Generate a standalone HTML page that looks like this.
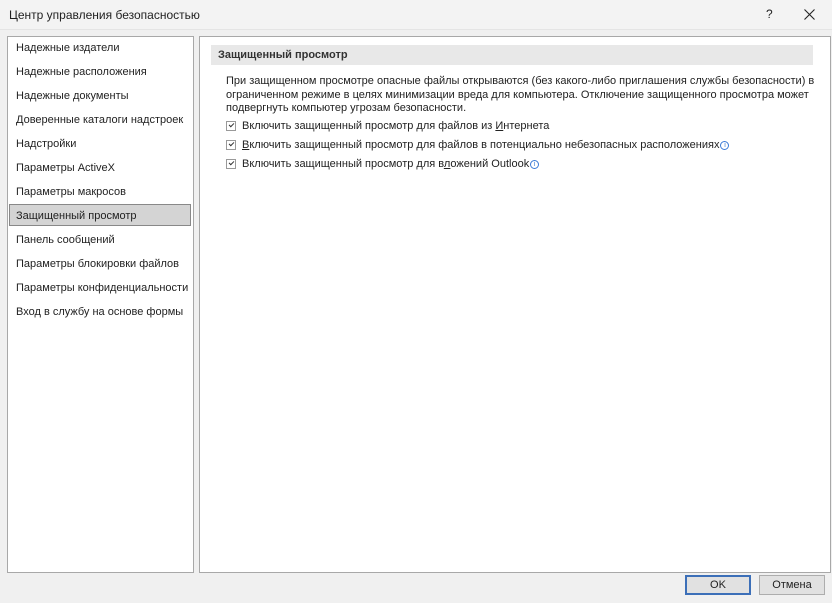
<!DOCTYPE html>
<html><head><meta charset="utf-8"><style>
*{margin:0;padding:0;box-sizing:border-box}
body{width:832px;height:603px;background:#f0f0f0;font-family:"Liberation Sans",sans-serif;font-size:11px;color:#222;position:relative;overflow:hidden}
.abs{position:absolute}
.title{left:0;top:0;width:832px;height:30px;background:#f3f3f3;border-bottom:1px solid #e4e4e4}
.panel{background:#fff;border:1px solid #a8a8a8}
.item{position:absolute;left:8px;white-space:nowrap}
.sel{position:absolute;left:1px;top:167px;width:182px;height:22px;background:#d4d4d4;border:1px solid #888}
.cb{position:absolute;left:226px;width:10px;height:10px;border:1px solid #999;background:#fff}
.cb::after{content:"";position:absolute;left:2px;top:1px;width:4px;height:2px;border-left:1px solid #333;border-bottom:1px solid #333;transform:rotate(-45deg)}
.lbl{position:absolute;left:242px;white-space:nowrap}
.btn{position:absolute;top:575px;height:20px;width:66px;text-align:center;line-height:18px;background:#e1e1e1;border:1px solid #adadad;font-size:11px}
.info{display:inline-block;width:9px;height:9px;border:1px solid #3b7bd6;border-radius:50%;color:#3b7bd6;font-size:7px;line-height:8px;text-align:center;vertical-align:1px;margin-left:1px}
</style></head><body>
<div class="abs title"></div>
<div class="abs" style="left:9px;top:8px;font-size:12px">Центр управления безопасностью</div>
<div class="abs" style="left:766px;top:7px;font-size:12px">?</div>
<svg class="abs" style="left:804px;top:9px" width="11" height="11"><path d="M0.5 0.5L10.5 10.5M10.5 0.5L0.5 10.5" stroke="#222" stroke-width="1.1"/></svg>
<div class="abs panel" style="left:7px;top:36px;width:187px;height:537px">
<div class="sel"></div>
<div class="item" style="top:5px">Надежные издатели</div>
<div class="item" style="top:29px">Надежные расположения</div>
<div class="item" style="top:53px">Надежные документы</div>
<div class="item" style="top:77px">Доверенные каталоги надстроек</div>
<div class="item" style="top:101px">Надстройки</div>
<div class="item" style="top:125px">Параметры ActiveX</div>
<div class="item" style="top:149px">Параметры макросов</div>
<div class="item" style="top:173px">Защищенный просмотр</div>
<div class="item" style="top:197px">Панель сообщений</div>
<div class="item" style="top:221px">Параметры блокировки файлов</div>
<div class="item" style="top:245px">Параметры конфиденциальности</div>
<div class="item" style="top:269px">Вход в службу на основе формы</div>
</div>
<div class="abs panel" style="left:199px;top:36px;width:632px;height:537px"></div>
<div class="abs" style="left:211px;top:45px;width:602px;height:20px;background:#e8e8e8"></div>
<div class="abs" style="left:218px;top:49px;font-weight:bold;color:#333">Защищенный просмотр</div>
<div class="abs" style="left:226px;top:75px;width:592px;line-height:13.5px">При защищенном просмотре опасные файлы открываются (без какого-либо приглашения службы безопасности) в ограниченном режиме в целях минимизации вреда для компьютера. Отключение защищенного просмотра может подвергнуть компьютер угрозам безопасности.</div>
<div class="cb" style="top:121px"></div><div class="lbl" style="top:120px">Включить защищенный просмотр для файлов из <u>И</u>нтернета</div>
<div class="cb" style="top:140px"></div><div class="lbl" style="top:139px"><u>В</u>ключить защищенный просмотр для файлов в потенциально небезопасных расположениях<span class="info">i</span></div>
<div class="cb" style="top:159px"></div><div class="lbl" style="top:158px">Включить защищенный просмотр для в<u>л</u>ожений Outlook<span class="info">i</span></div>
<div class="btn" style="left:685px;border:2px solid #3c6fb8;line-height:16px">OK</div>
<div class="btn" style="left:759px">Отмена</div>
</body></html>
